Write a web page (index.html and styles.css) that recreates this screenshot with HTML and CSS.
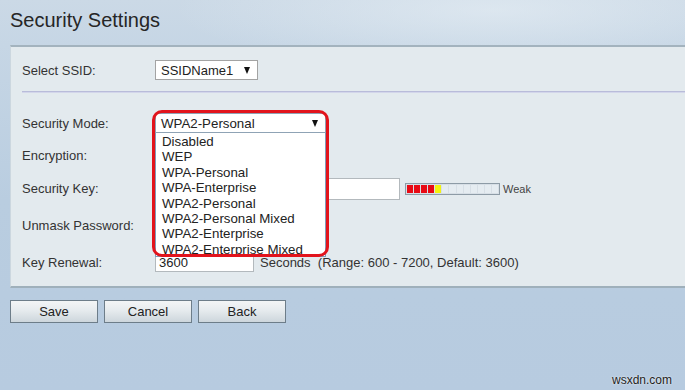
FILE: index.html
```html
<!DOCTYPE html>
<html>
  <head>
    <title>Security Settings</title>
    <link rel="stylesheet" href="styles.css">
  </head>

  <body>
    <div class="page">
      <h1 class="title">Security Settings</h1>

      <div class="panel">
        <div class="row">
          <label class="label">Select SSID:</label>
          <div class="select ssid-select">
            <span>SSIDName1</span>
            <span class="arrow"></span>
          </div>
        </div>

        <div class="separator"></div>

        <div class="row row-mode">
          <label class="label">Security Mode:</label>
          <div class="dropdown">
            <div class="select mode-select">
              <span>WPA2-Personal</span>
              <span class="arrow"></span>
            </div>
            <ul class="options">
              <li>Disabled</li>
              <li>WEP</li>
              <li>WPA-Personal</li>
              <li>WPA-Enterprise</li>
              <li>WPA2-Personal</li>
              <li>WPA2-Personal Mixed</li>
              <li>WPA2-Enterprise</li>
              <li>WPA2-Enterprise Mixed</li>
            </ul>
            <div class="highlight"></div>
          </div>
        </div>

        <div class="row">
          <label class="label">Encryption:</label>
          <div class="select enc-select"></div>
        </div>

        <div class="row row-key">
          <label class="label">Security Key:</label>
          <input type="password" class="text-input key-input" />
          <div class="meter">
            <span class="seg red"></span>
            <span class="seg red"></span>
            <span class="seg red"></span>
            <span class="seg red"></span>
            <span class="seg yellow"></span>
            <span class="seg"></span>
            <span class="seg"></span>
            <span class="seg"></span>
            <span class="seg"></span>
            <span class="seg"></span>
            <span class="seg"></span>
            <span class="seg"></span>
            <span class="seg"></span>
          </div>
          <span class="strength">Weak</span>
        </div>

        <div class="row row-loose">
          <label class="label">Unmask Password:</label>
          <input type="checkbox" class="check" />
        </div>

        <div class="row row-loose">
          <label class="label">Key Renewal:</label>
          <input type="text" class="text-input renewal-input" value="3600" />
          <span class="hint">Seconds&nbsp;&nbsp;(Range: 600 - 7200, Default: 3600)</span>
        </div>
      </div>

      <div class="buttons">
        <button class="btn">Save</button>
        <button class="btn">Cancel</button>
        <button class="btn">Back</button>
      </div>

      <div class="watermark">wsxdn.com</div>
    </div>
  </body>
</html>
```

FILE: styles.css
```css
body {
  margin: 0;
  font-family: "Liberation Sans", Arial, sans-serif;
  font-size: 13px;
  color: #333;
  background: #b8cce0;
}

.page {
  position: relative;
  height: 390px;
  overflow: hidden;
  background:
    radial-gradient(ellipse 320px 60px at 72% 10px, rgba(235, 242, 247, 0.55), rgba(235, 242, 247, 0)),
    linear-gradient(180deg, #cbd9e6 0, #c6d6e5 45px, #b9cde0 200px, #b7cbe0 390px);
}

.title {
  margin: 0;
  padding: 8px 0 0 10px;
  height: 24px;
  line-height: 24px;
  font-size: 20px;
  font-weight: normal;
  color: #262626;
}

.panel {
  margin: 13px 0 0 10px;
  padding: 11px 0 12px 11px;
  background: #e3eaee;
  border-top: 2px solid #a3b3be;
  border-bottom: 2px solid #9fb0bb;
  border-left: 1px solid #ccd7df;
}

.row {
  display: flex;
  align-items: center;
  height: 24px;
  margin-top: 8px;
}

.row:first-child {
  margin-top: 0;
}

.row-mode {
  margin-top: 18px;
}

.row-key {
  margin-top: 9px;
}

.row-loose {
  margin-top: 13px;
}

.label {
  width: 133px;
  flex: none;
}

.separator {
  margin-top: 9px;
  border-top: 1px solid #b9bcda;
  border-bottom: 1px solid #d3d6ea;
}

.select {
  box-sizing: border-box;
  display: flex;
  align-items: center;
  justify-content: space-between;
  height: 20px;
  padding: 0 7px 0 5px;
  background: #fff;
  border: 1px solid #a3a3a3;
  color: #222;
}

.arrow {
  width: 0;
  height: 0;
  border-left: 3.5px solid transparent;
  border-right: 3.5px solid transparent;
  border-top: 7px solid #111;
}

.ssid-select {
  width: 103px;
}

.enc-select {
  width: 120px;
}

.dropdown {
  position: relative;
  z-index: 2;
}

.mode-select {
  width: 171px;
  font-size: 13.3px;
  border-color: #8fa3b5;
}

.options {
  position: absolute;
  top: 20px;
  left: 0;
  box-sizing: border-box;
  width: 171px;
  height: 124px;
  margin: 0;
  padding: 1px 0 0 0;
  list-style: none;
  overflow: hidden;
  background: #fff;
  border: 1px solid #7f9db9;
  border-top: none;
  font-size: 13.3px;
  color: #222;
}

.options li {
  height: 15.4px;
  line-height: 15.4px;
  padding-left: 6px;
  white-space: nowrap;
}

.highlight {
  position: absolute;
  left: -3px;
  top: -3px;
  box-sizing: border-box;
  width: 177px;
  height: 147px;
  border: 3px solid #e2141c;
  border-radius: 10px;
}

.text-input {
  box-sizing: border-box;
  margin: 0;
  padding: 0 3px;
  background: #fff;
  border: 1px solid #b3b9bd;
  font-family: "Liberation Sans", Arial, sans-serif;
  font-size: 13px;
  color: #222;
}

.key-input {
  width: 245px;
  height: 22px;
  margin-top: 2px;
}

.renewal-input {
  width: 99px;
  height: 20px;
}

.meter {
  display: flex;
  gap: 1px;
  box-sizing: border-box;
  width: 95px;
  height: 12px;
  margin: 2px 0 0 5px;
  padding: 1px;
  background: #d7dfe6;
  border: 1px solid #8d9ba6;
}

.seg {
  flex: 1;
  background: #e5ecf1;
}

.seg.red {
  background: #e80a14;
}

.seg.yellow {
  background: #f3f30f;
}

.strength {
  margin: 2px 0 0 3px;
  font-size: 11px;
  color: #444;
}

.check {
  margin: 0 0 0 2px;
}

.hint {
  margin-left: 6px;
  color: #333;
}

.buttons {
  display: flex;
  gap: 6px;
  margin: 12px 0 0 10px;
}

.btn {
  box-sizing: border-box;
  width: 88px;
  height: 23px;
  padding: 0;
  background: linear-gradient(180deg, #f3f5f6 0, #e6ebee 45%, #cdd6dc 100%);
  border: 1px solid #6d7d89;
  font-family: "Liberation Sans", Arial, sans-serif;
  font-size: 13px;
  color: #222;
  cursor: pointer;
}

.watermark {
  position: absolute;
  right: 13px;
  bottom: 3px;
  font-size: 12px;
  color: #222;
  text-shadow: 0 0 2px #fff;
}
```
